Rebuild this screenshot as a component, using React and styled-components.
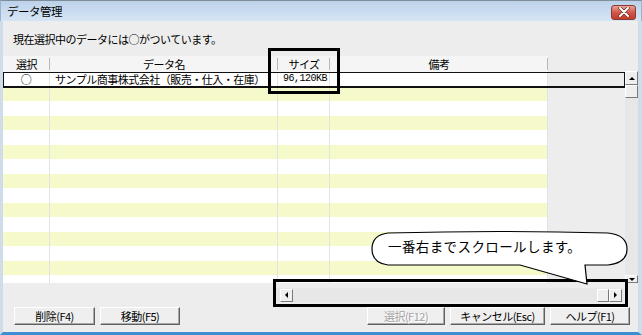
import React from 'react'
import styled, { createGlobalStyle } from 'styled-components'

const GlobalStyle = createGlobalStyle`
  html, body { margin: 0; padding: 0; background: #fff; }
  body { font-family: "Noto Sans CJK JP", "Noto Sans", sans-serif; }
  * { box-sizing: border-box; }
`

const Window = styled.div`
  position: relative;
  width: 642px;
  height: 335px;
  display: flex;
  flex-direction: column;
  overflow: hidden;
  font-size: 11px;
  letter-spacing: -0.5px;
  color: #000;
`

const TitleBar = styled.div`
  height: 21px;
  flex: none;
  display: flex;
  align-items: center;
  justify-content: space-between;
  padding: 0 5px 0 6px;
  background: linear-gradient(to bottom, #bcd2ea, #d6e5f5);
  border-top: 1px solid #7f8c99;
  border-left: 1px solid #9fb2c7;
  border-right: 1px solid #9fb2c7;
`

const Title = styled.span`
  font-size: 11.5px;
  line-height: 14px;
`

const CloseButton = styled.div`
  width: 25px;
  height: 15px;
  margin-top: 2px;
  border-radius: 3px;
  border: 1px solid #8a3a33;
  background: linear-gradient(to bottom, #e9a397, #d1574a 50%, #c43b2c);
  display: flex;
  align-items: center;
  justify-content: center;
`

const Body = styled.div`
  flex: 1;
  position: relative;
  display: flex;
  flex-direction: column;
  background: #ededed;
  border-left: 3px solid #cfdcea;
  border-right: 4px solid #cfdcea;
  border-bottom: 3px solid #3d8fd1;
`

const Message = styled.div`
  height: 35px;
  flex: none;
  display: flex;
  align-items: center;
  padding: 0 0 0 10px;
`

const GridWrap = styled.div`
  height: 227px;
  flex: none;
  display: flex;
`

const TablePane = styled.div`
  width: 622px;
  display: flex;
  flex-direction: column;
  overflow: hidden;
`

const cols = '47px 228px 52px 218px 1fr'

const HeaderRow = styled.div`
  height: 16px;
  flex: none;
  display: grid;
  grid-template-columns: ${cols};
`

const HeaderCell = styled.div`
  position: relative;
  background: ${p => (p.$blank ? '#ededed' : '#f5f5f5')};
  text-align: center;
  line-height: 16px;
  &::after {
    content: '';
    display: ${p => (p.$blank ? 'none' : 'block')};
    position: absolute;
    right: 0;
    top: 2px;
    bottom: 2px;
    width: 1px;
    background: #b9b9b9;
    box-shadow: 1px 0 0 #fff;
  }
`

const Rows = styled.div`
  flex: 1;
  overflow: hidden;
`

const DataRow = styled.div`
  position: relative;
  height: 14.5px;
  display: grid;
  grid-template-columns: ${cols};
  background: ${p => (p.$alt ? '#f6f9c9' : '#ffffff')};
  ${p => p.$selected && `
    z-index: 1;
    outline: 2px solid #111;
    outline-offset: -1px;
  `}
`

const Cell = styled.div`
  border-right: 1px solid #e3e3e3;
  line-height: 14px;
  white-space: nowrap;
  overflow: hidden;
  text-align: ${p => p.$align || 'left'};
  padding-left: ${p => p.$pad || 0}px;
  font-family: ${p => (p.$mono ? '"Liberation Mono", monospace' : 'inherit')};
  font-size: ${p => (p.$mono ? '10px' : 'inherit')};
  letter-spacing: ${p => (p.$mono ? '-0.5px' : 'inherit')};
`

const Filler = styled.div`
  background: #ededed;
`

const VScroll = styled.div`
  width: 13px;
  margin-top: 15px;
  height: 212px;
  display: flex;
  flex-direction: column;
  background: #e7e7e7;
  overflow: hidden;
`

const ScrollBtn = styled.div`
  flex: none;
  width: ${p => p.$w || 13}px;
  height: ${p => p.$h || 14}px;
  background: #efefef;
  border-top: 1px solid #fff;
  border-left: 1px solid #fff;
  border-right: 1px solid #7a7a7a;
  border-bottom: 1px solid #7a7a7a;
  display: flex;
  align-items: ${p => (p.$top ? 'flex-start' : 'center')};
  justify-content: center;
  padding-top: ${p => (p.$top ? 2 : 0)}px;
`

const Track = styled.div`
  flex: 1;
`

const Arrow = styled.span`
  width: 0;
  height: 0;
  border-style: solid;
  ${p => p.$dir === 'up' && 'border-width: 0 3px 3px 3px; border-color: transparent transparent #000 transparent;'}
  ${p => p.$dir === 'down' && 'border-width: 3px 3px 0 3px; border-color: #000 transparent transparent transparent;'}
  ${p => p.$dir === 'left' && 'border-width: 3px 3px 3px 0; border-color: transparent #000 transparent transparent;'}
  ${p => p.$dir === 'right' && 'border-width: 3px 0 3px 3px; border-color: transparent transparent transparent #000;'}
`

const HScrollRow = styled.div`
  margin-top: 5px;
  height: 14px;
  flex: none;
  padding-left: 273px;
`

const HScroll = styled.div`
  width: 348px;
  height: 14px;
  display: flex;
  align-items: center;
  padding: 0 2px 0 4px;
  background: #e7e7e7;
`

const ButtonBar = styled.div`
  margin-top: 5px;
  height: 18px;
  flex: none;
  display: flex;
  justify-content: space-between;
  padding: 0 8px 0 11px;
`

const Group = styled.div`
  display: flex;
  gap: 5px;
`

const Button = styled.div`
  width: ${p => p.$w}px;
  height: 18px;
  display: flex;
  align-items: center;
  justify-content: center;
  background: #efefef;
  border-top: 1px solid #fff;
  border-left: 1px solid #fff;
  border-right: 1px solid #5f5f5f;
  border-bottom: 1px solid #5f5f5f;
  box-shadow: inset -1px -1px 0 #a9a9a9;
  color: ${p => (p.$disabled ? '#a3a3a3' : '#000')};
  text-shadow: ${p => (p.$disabled ? '1px 1px 0 #fff' : 'none')};
`

const Mark = styled.div`
  position: absolute;
  left: ${p => p.$x}px;
  top: ${p => p.$y}px;
  width: ${p => p.$w}px;
  height: ${p => p.$h}px;
  border: 3px solid #000;
  pointer-events: none;
  z-index: 3;
`

const Bubble = styled.div`
  position: absolute;
  left: 365px;
  top: 209px;
  width: 265px;
  height: 58px;
  z-index: 4;
  svg { position: absolute; inset: 0; }
`

const BubbleText = styled.div`
  position: relative;
  padding: 8px 0 0 20px;
  line-height: 16px;
  font-size: 13.5px;
  letter-spacing: 0.4px;
`

const rows = Array.from({ length: 15 }, (_, i) => i)

export default function App() {
  return (
    <>
      <GlobalStyle />
      <Window>
        <TitleBar>
          <Title>データ管理</Title>
          <CloseButton>
            <svg width="12" height="10" viewBox="0 0 12 10">
              <path d="M2 1 L10 9 M10 1 L2 9" stroke="#6d2a22" strokeWidth="3.4" strokeLinecap="round" />
              <path d="M2 1 L10 9 M10 1 L2 9" stroke="#fff" strokeWidth="2" strokeLinecap="round" />
            </svg>
          </CloseButton>
        </TitleBar>
        <Body>
          <Message>現在選択中のデータには○がついています。</Message>
          <GridWrap>
            <TablePane>
              <HeaderRow>
                <HeaderCell>選択</HeaderCell>
                <HeaderCell>データ名</HeaderCell>
                <HeaderCell>サイズ</HeaderCell>
                <HeaderCell>備考</HeaderCell>
                <HeaderCell $blank />
              </HeaderRow>
              <Rows>
                {rows.map(i => (
                  <DataRow key={i} $alt={i % 2 === 1} $selected={i === 0}>
                    <Cell $align="center">{i === 0 ? '○' : ''}</Cell>
                    <Cell $pad={5}>{i === 0 ? 'サンプル商事株式会社（販売・仕入・在庫）' : ''}</Cell>
                    <Cell $pad={5} $mono>{i === 0 ? '96,120KB' : ''}</Cell>
                    <Cell />
                    <Filler />
                  </DataRow>
                ))}
              </Rows>
            </TablePane>
            <VScroll>
              <ScrollBtn><Arrow $dir="up" /></ScrollBtn>
              <ScrollBtn $h={13} />
              <Track />
              <ScrollBtn $h={8} $top><Arrow $dir="down" /></ScrollBtn>
            </VScroll>
          </GridWrap>
          <HScrollRow>
            <HScroll>
              <ScrollBtn $h={13}><Arrow $dir="left" /></ScrollBtn>
              <Track />
              <ScrollBtn $h={13} $w={12} />
              <ScrollBtn $h={13}><Arrow $dir="right" /></ScrollBtn>
            </HScroll>
          </HScrollRow>
          <ButtonBar>
            <Group>
              <Button $w={81}>削除(F4)</Button>
              <Button $w={80}>移動(F5)</Button>
            </Group>
            <Group>
              <Button $w={78} $disabled>選択(F12)</Button>
              <Button $w={95}>キャンセル(Esc)</Button>
              <Button $w={80}>ヘルプ(F1)</Button>
            </Group>
          </ButtonBar>

          <Mark $x={265} $y={27} $w={72} $h={46} />
          <Mark $x={270} $y={258} $w={355} $h={28} />
          <Bubble>
            <svg width="265" height="58" viewBox="0 0 265 58">
              <path
                d="M20 3 Q131 0 240 3 Q259 5 259 19 Q259 33 240 35 L217 35 L219 54 L152 35 L20 35 Q4 33 4 19 Q4 5 20 3 Z"
                fill="#fff"
                stroke="#000"
                strokeWidth="1.2"
              />
            </svg>
            <BubbleText>一番右までスクロールします。</BubbleText>
          </Bubble>
        </Body>
      </Window>
    </>
  )
}
